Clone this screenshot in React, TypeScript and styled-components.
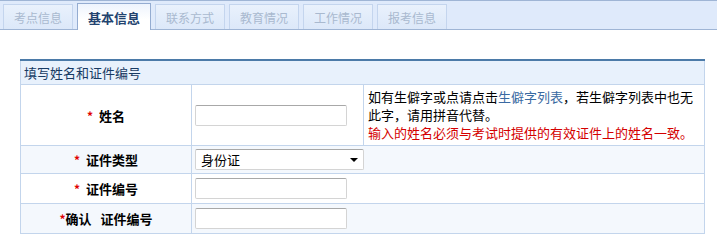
import styled, { createGlobalStyle } from "styled-components";

const GlobalStyle = createGlobalStyle`
  html, body {
    margin: 0;
    padding: 0;
    background: #ffffff;
  }
  body {
    font-family: "Noto Sans CJK SC", "Liberation Sans", sans-serif;
    font-size: 13px;
    color: #000;
  }
`;

const Page = styled.div`
  width: 717px;
  height: 238px;
  overflow: hidden;
`;

const TabBar = styled.div`
  box-sizing: border-box;
  height: 30px;
  border-top: 1px solid #9fb5d5;
  border-bottom: 1px solid #9fb5d5;
  background: #dfeafb;
  display: flex;
  align-items: flex-end;
  gap: 4px;
  padding-left: 3px;
`;

const Tab = styled.div<{ $active?: boolean }>`
  box-sizing: border-box;
  width: ${({ $active }) => ($active ? "74px" : "70px")};
  height: ${({ $active }) => ($active ? "27px" : "25px")};
  margin-bottom: ${({ $active }) => ($active ? "-1px" : "0")};
  border: 1px solid ${({ $active }) => ($active ? "#94acd1" : "#c4d5ee")};
  border-bottom: none;
  background: ${({ $active }) =>
    $active
      ? "linear-gradient(#eef4fd, #ffffff 60%)"
      : "linear-gradient(#e9f1fc, #dce8f9)"};
  color: ${({ $active }) => ($active ? "#23436f" : "#a9b9cf")};
  font-size: ${({ $active }) => ($active ? "13px" : "12px")};
  font-weight: ${({ $active }) => ($active ? "bold" : "normal")};
  display: flex;
  align-items: center;
  justify-content: center;
  padding-top: 1px;
`;

const FormTable = styled.table`
  margin: 29px 0 0 20px;
  width: 684px;
  border-collapse: collapse;
  table-layout: fixed;
  border-top: 2px solid #4b7aa8;
`;

const Caption = styled.th`
  height: 23px;
  padding: 0 0 0 3px;
  background: #e8f1fc;
  border: 1px solid #c3d5ec;
  border-top: none;
  text-align: left;
  font-weight: normal;
  font-size: 13px;
  color: #173a63;
`;

const Row = styled.tr<{ $alt?: boolean; $h: number }>`
  height: ${({ $h }) => $h}px;
  background: ${({ $alt }) => ($alt ? "#f4f8fd" : "#ffffff")};
`;

const Label = styled.td`
  border: 1px solid #c3d5ec;
  text-align: center;
  font-weight: bold;
  font-size: 13px;
  padding: 0;
`;

const Star = styled.span<{ $tight?: boolean }>`
  color: #e00000;
  font-size: 12px;
  margin-right: ${({ $tight }) => ($tight ? "0" : "6px")};
`;

const Gap = styled.span`
  display: inline-block;
  width: 9px;
`;

const Field = styled.td`
  border: 1px solid #c3d5ec;
  padding: 0 0 0 3px;
`;

const Note = styled.td`
  border: 1px solid #c3d5ec;
  padding: 0 4px;
  line-height: 18px;
  font-size: 13px;
  vertical-align: middle;
`;

const Link = styled.a`
  color: #3a6aa2;
  text-decoration: none;
`;

const Warn = styled.div`
  color: #d40000;
`;

const TextInput = styled.input`
  box-sizing: border-box;
  width: 152px;
  height: 21px;
  margin: 0;
  border: 1px solid #d4d4d4;
  border-top-color: #a8a8a8;
  border-radius: 2px;
  background: #fff;
  padding: 0 3px;
  font: inherit;
  display: block;
`;

const SelectWrap = styled.div`
  position: relative;
  width: 169px;
  height: 21px;
  &::after {
    content: "";
    position: absolute;
    right: 6px;
    top: 9px;
    border-left: 4px solid transparent;
    border-right: 4px solid transparent;
    border-top: 4px solid #000;
    pointer-events: none;
  }
`;

const Select = styled.select`
  box-sizing: border-box;
  appearance: none;
  width: 100%;
  height: 21px;
  margin: 0;
  border: 1px solid #d4d4d4;
  border-top-color: #a8a8a8;
  border-radius: 2px;
  background: #fff;
  padding: 0 0 0 5px;
  font-family: "Noto Sans CJK SC", "Liberation Sans", sans-serif;
  font-size: 13px;
  color: #000;
  display: block;
`;

const tabs = ["考点信息", "基本信息", "联系方式", "教育情况", "工作情况", "报考信息"];

export default function App() {
  return (
    <Page>
      <GlobalStyle />
      <TabBar>
        {tabs.map((t, i) => (
          <Tab key={t} $active={i === 1}>
            {t}
          </Tab>
        ))}
      </TabBar>
      <FormTable>
        <colgroup>
          <col style={{ width: 171 }} />
          <col style={{ width: 172 }} />
          <col style={{ width: 341 }} />
        </colgroup>
        <thead>
          <tr>
            <Caption colSpan={3}>填写姓名和证件编号</Caption>
          </tr>
        </thead>
        <tbody>
          <Row $h={61}>
            <Label>
              <Star>*</Star>姓名
            </Label>
            <Field>
              <TextInput type="text" />
            </Field>
            <Note>
              如有生僻字或点请点击<Link href="#">生僻字列表</Link>，若生僻字列表中也无
              <br />
              此字，请用拼音代替。
              <Warn>输入的姓名必须与考试时提供的有效证件上的姓名一致。</Warn>
            </Note>
          </Row>
          <Row $h={28} $alt>
            <Label>
              <Star>*</Star>证件类型
            </Label>
            <Field colSpan={2}>
              <SelectWrap>
                <Select defaultValue="身份证">
                  <option>身份证</option>
                  <option>护照</option>
                  <option>军官证</option>
                </Select>
              </SelectWrap>
            </Field>
          </Row>
          <Row $h={30}>
            <Label>
              <Star>*</Star>证件编号
            </Label>
            <Field colSpan={2}>
              <TextInput type="text" />
            </Field>
          </Row>
          <Row $h={30} $alt>
            <Label>
              <Star $tight>*</Star>确认<Gap />证件编号
            </Label>
            <Field colSpan={2}>
              <TextInput type="text" />
            </Field>
          </Row>
        </tbody>
      </FormTable>
    </Page>
  );
}
